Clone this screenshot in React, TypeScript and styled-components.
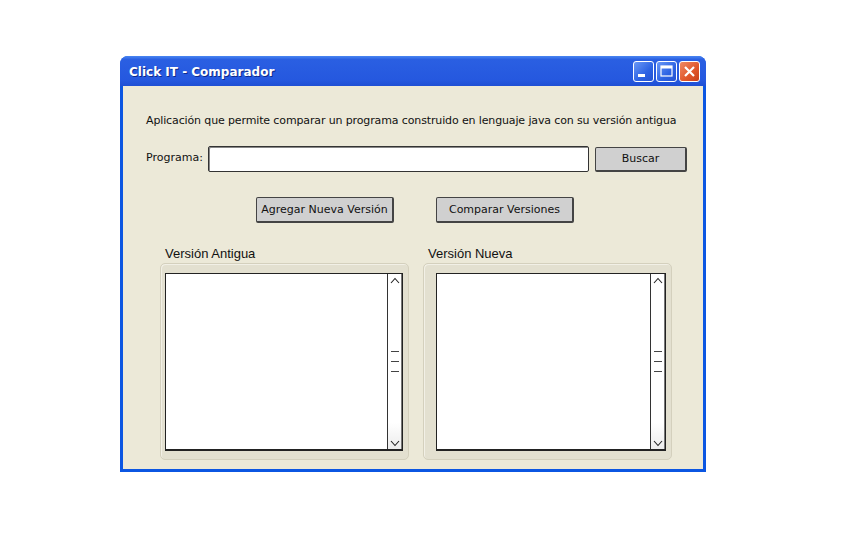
import React from 'react';
import styled, { createGlobalStyle } from 'styled-components';

const GlobalStyle = createGlobalStyle`
  html, body {
    margin: 0;
    padding: 0;
    background: #ffffff;
  }
`;

const sketchFont = `'Comic Sans MS', 'DejaVu Sans', sans-serif`;

const Page = styled.div`
  padding: 56px 0 0 120px;
  width: 868px;
  height: 539px;
  box-sizing: border-box;
`;

const Window = styled.div`
  width: 586px;
  height: 416px;
  display: flex;
  flex-direction: column;
  background: #0b56e2;
  border-radius: 8px 8px 0 0;
  box-sizing: border-box;
`;

const TitleBar = styled.div`
  height: 30px;
  display: flex;
  align-items: center;
  padding: 0 6px 0 9px;
  border-radius: 8px 8px 0 0;
  background: linear-gradient(#4a86f2 0%, #2a5fe2 12%, #2558df 80%, #1f4fd4 100%);
`;

const Title = styled.div`
  flex: 1;
  color: #ffffff;
  font-family: 'DejaVu Sans', sans-serif;
  font-weight: bold;
  font-size: 12px;
  text-shadow: 1px 1px 0 #0d2a8a;
  padding-top: 1px;
`;

const Controls = styled.div`
  display: flex;
  gap: 2px;
  padding-top: 1px;
`;

const CtrlButton = styled.div<{ $close?: boolean }>`
  width: 19px;
  height: 19px;
  border: 1px solid #ffffff;
  border-radius: 3px;
  display: flex;
  align-items: center;
  justify-content: center;
  background: ${(p) =>
    p.$close
      ? 'linear-gradient(135deg, #f08a64 0%, #e0562a 60%, #c8401a 100%)'
      : 'linear-gradient(135deg, #6a98f6 0%, #2c62e3 60%, #2452d2 100%)'};
`;

const Body = styled.div`
  flex: 1;
  margin: 0 3px 3px 3px;
  background: #ece9d8;
  display: flex;
  flex-direction: column;
  font-family: ${sketchFont};
  color: #111;
`;

const Description = styled.div`
  font-size: 11px;
  margin: 27px 0 0 23px;
  height: 16px;
  line-height: 16px;
  letter-spacing: -0.13px;
`;

const FormRow = styled.div`
  display: flex;
  align-items: center;
  margin: 17px 0 0 23px;
  height: 26px;
`;

const Label = styled.div`
  font-size: 11px;
  width: 62px;
  margin-top: -3px;
`;

const TextInput = styled.div`
  width: 379px;
  height: 24px;
  background: #ffffff;
  border: 1px solid #333;
  border-radius: 2px;
  box-shadow: inset 1px 1px 0 #888;
`;

const SketchButton = styled.div<{ $w: number; $h: number }>`
  width: ${(p) => p.$w}px;
  height: ${(p) => p.$h}px;
  box-sizing: border-box;
  background: #d0d0d0;
  border: 1px solid #444;
  border-right-width: 2px;
  border-bottom-width: 2px;
  border-radius: 2px;
  display: flex;
  align-items: center;
  justify-content: center;
  font-size: 11px;
  font-family: ${sketchFont};
`;

const ActionRow = styled.div`
  display: flex;
  gap: 42px;
  margin: 25px 0 0 133px;
  height: 26px;
`;

const Panels = styled.div`
  display: grid;
  grid-template-columns: 249px 249px;
  column-gap: 14px;
  margin: 23px 0 0 37px;
`;

const Group = styled.div`
  display: flex;
  flex-direction: column;
`;

const GroupLabel = styled.div`
  font-family: 'Liberation Sans', Arial, sans-serif;
  font-size: 13px;
  color: #111;
  height: 17px;
  padding-left: 5px;
  margin-bottom: 0;
`;

const GroupBox = styled.div<{ $left: number }>`
  height: 197px;
  box-sizing: border-box;
  background: #e3e0d0;
  border: 1px solid #d4d0bd;
  border-radius: 5px;
  box-shadow: inset 1px 1px 0 #f2f0e6;
  padding: 9px 0 0 ${(p) => p.$left}px;
`;

const ListBox = styled.div<{ $w: number }>`
  width: ${(p) => p.$w}px;
  height: 178px;
  box-sizing: border-box;
  background: #ffffff;
  border: 1px solid #222;
  border-bottom-width: 2px;
  display: flex;
  justify-content: flex-end;
`;

const ScrollBar = styled.div`
  width: 15px;
  box-sizing: border-box;
  border-left: 1px solid #333;
  border-right: 1px solid #777;
  background: linear-gradient(#ffffff 0%, #ffffff 85%, #ececec 100%);
  display: flex;
  flex-direction: column;
  align-items: center;
  padding: 3px 0 2px;
`;

const Grip = styled.div`
  display: flex;
  flex-direction: column;
  gap: 9px;
  margin-top: 67px;
  & > span {
    display: block;
    width: 8px;
    height: 1px;
    background: #444;
  }
`;

const Spacer = styled.div`
  flex: 1;
`;

const Chevron = ({ up }: { up?: boolean }) => (
  <svg width="10" height="7" viewBox="0 0 10 7">
    <path
      d={up ? 'M1 6 L5 1.5 L9 6' : 'M1 1 L5 5.5 L9 1'}
      fill="none"
      stroke="#222"
      strokeWidth="1.1"
    />
  </svg>
);

function List({ width }: { width: number }) {
  return (
    <ListBox $w={width}>
      <ScrollBar>
        <Chevron up />
        <Grip>
          <span />
          <span />
          <span />
        </Grip>
        <Spacer />
        <Chevron />
      </ScrollBar>
    </ListBox>
  );
}

export default function App() {
  return (
    <Page>
      <GlobalStyle />
      <Window>
        <TitleBar>
          <Title>Click IT - Comparador</Title>
          <Controls>
            <CtrlButton>
              <svg width="19" height="19" viewBox="0 0 19 19">
                <rect x="4" y="12" width="7" height="3" fill="#fff" />
              </svg>
            </CtrlButton>
            <CtrlButton>
              <svg width="19" height="19" viewBox="0 0 19 19">
                <rect x="4" y="4" width="11" height="10" fill="none" stroke="#fff" strokeWidth="1.2" />
                <rect x="4" y="4" width="11" height="2.5" fill="#fff" />
              </svg>
            </CtrlButton>
            <CtrlButton $close>
              <svg width="19" height="19" viewBox="0 0 19 19">
                <path d="M5 5 L14 14 M14 5 L5 14" stroke="#fff" strokeWidth="2.2" />
              </svg>
            </CtrlButton>
          </Controls>
        </TitleBar>
        <Body>
          <Description>
            Aplicación que permite comparar un programa construido en lenguaje java con su versión antigua
          </Description>
          <FormRow>
            <Label>Programa:</Label>
            <TextInput />
            <SketchButton $w={92} $h={25} style={{ marginLeft: 6 }}>
              Buscar
            </SketchButton>
          </FormRow>
          <ActionRow>
            <SketchButton $w={138} $h={26}>Agregar Nueva Versión</SketchButton>
            <SketchButton $w={138} $h={26}>Comparar Versiones</SketchButton>
          </ActionRow>
          <Panels>
            <Group>
              <GroupLabel>Versión Antigua</GroupLabel>
              <GroupBox $left={4}>
                <List width={238} />
              </GroupBox>
            </Group>
            <Group>
              <GroupLabel>Versión Nueva</GroupLabel>
              <GroupBox $left={12}>
                <List width={230} />
              </GroupBox>
            </Group>
          </Panels>
        </Body>
      </Window>
    </Page>
  );
}
